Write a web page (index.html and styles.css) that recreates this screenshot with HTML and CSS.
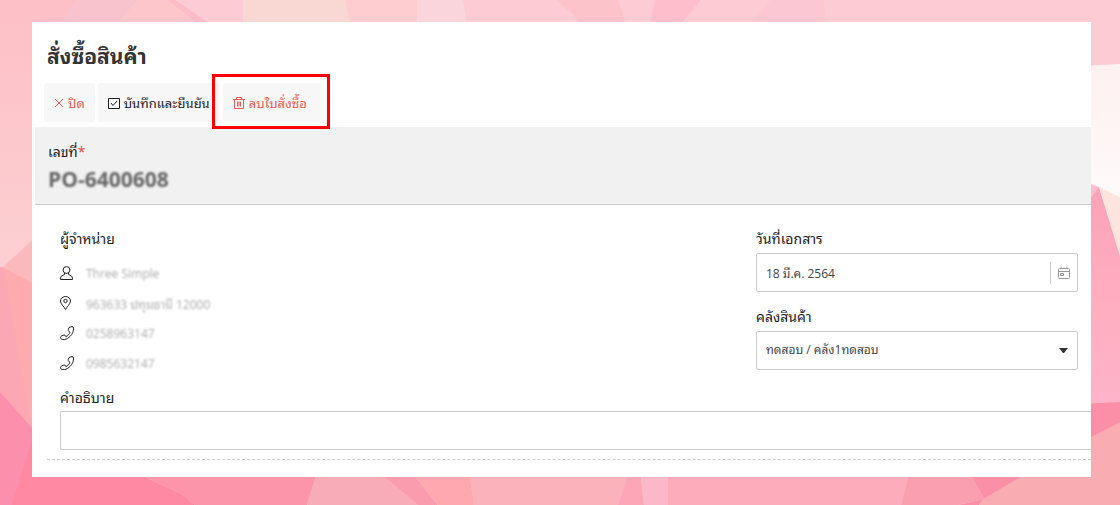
FILE: index.html
```html
<!DOCTYPE html>
<html lang="th">
<head>
  <meta charset="UTF-8" />
  <title>สั่งซื้อสินค้า</title>
  <link rel="stylesheet" href="styles.css">
</head>
<body>
  <svg class="backdrop" viewBox="0 0 1120 505" preserveAspectRatio="none" aria-hidden="true">
    <defs>
      <linearGradient id="fadeLeft" x1="0" y1="0" x2="0" y2="1">
        <stop offset="0" stop-color="#fdbfc6" />
        <stop offset="1" stop-color="#fcd0d2" />
      </linearGradient>
      <linearGradient id="fadeRight" x1="0" y1="0" x2="0" y2="1">
        <stop offset="0" stop-color="#faa2b9" />
        <stop offset="0.5" stop-color="#ffadbe" />
        <stop offset="1" stop-color="#feb3ca" />
      </linearGradient>
      <linearGradient id="fadeWhite" x1="0" y1="0" x2="0" y2="1">
        <stop offset="0" stop-color="#fdf0f0" />
        <stop offset="1" stop-color="#fffafa" />
      </linearGradient>
    </defs>
    <!-- top -->
    <path fill="#fdcbd3" d="M0 0h1120v80H0z" />
    <path fill="url(#fadeLeft)" d="M0 0h76L50 40v230H0z" />
    <path fill="#f9c3cd" d="M76 0h62l-36 40H50z" />
    <path fill="#fdc6ca" d="M138 0h37l45 30H112z" />
    <path fill="#fcbcc6" d="M168 0h7l35 24h-12z" />
    <path fill="#f9d8d3" d="M243 0h102l6 24H243z" />
    <path fill="#fdcdd0" d="M345 0h72v24h-66z" />
    <path fill="#fad5db" d="M417 0h46l4 24h-50z" />
    <path fill="#fdc3ca" d="M557 0h61l8 24h-43z" />
    <path fill="#ffbecb" d="M655 0h46l-20 24h-31z" />
    <path fill="#fbc7d2" d="M771 0h52l4 24h-78z" />
    <!-- left -->
    <path fill="#fbb9be" d="M3 267l37-34v54z" />
    <path fill="#fdabaf" d="M3 267l37 20v160L0 392V267z" />
    <path fill="#faa5b7" d="M0 267l3 0l20 115l9 46L0 392z" opacity="0.6" />
    <path fill="#fc8fab" d="M0 392l40 45v68H0z" />
    <!-- right -->
    <path fill="url(#fadeWhite)" d="M1080 66l40-2v140h-40z" />
    <path fill="#fcbcd0" d="M1080 180l19 7l-19 24z" />
    <path fill="url(#fadeRight)" d="M1080 211l19-24l21 69v146l-40 2z" />
    <path fill="#fde4de" d="M1099 187l21 10v59z" />
    <path fill="#f9acb2" d="M1080 404l40-2v103h-140z" />
    <path fill="#fc8fa8" d="M1080 404l40-2v20l-40 21z" />
    <!-- bottom -->
    <path fill="#ff88a2" d="M32 440h113v37l37 17l13 11H12z" />
    <path fill="#fc95aa" d="M145 470h173l-11 35H195l-13-11l-37-17z" />
    <path fill="#f7acb7" d="M318 470h58l42 35H307z" />
    <path fill="#fb9cae" d="M376 470h34l28 35h-20z" />
    <path fill="#ffa8b0" d="M410 470h59l5 35h-36z" />
    <path fill="#fbb2bb" d="M469 470h161l-12 35H474z" />
    <path fill="#fca6b8" d="M630 470h10l4 35h-26z" />
    <path fill="#fcb8c8" d="M640 470h28v35h-24z" />
    <path fill="#fcacba" d="M668 470h242l-9 35H668z" />
    <path fill="#f99fb0" d="M910 470h58l16 29l-26 6h-57z" />
    <path fill="#fc8fa8" d="M968 470h64l-48 29zM984 499l-26 6h21z" />
    <path fill="#f9acb2" d="M1032 470h88v35H979l5-6z" />
  </svg>

  <main class="panel">
    <h1>สั่งซื้อสินค้า</h1>

    <div class="toolbar">
      <button type="button" class="btn danger">
        <svg class="icon-close" viewBox="0 0 10 10"><path d="M1 1l8 8M9 1L1 9" /></svg>
        ปิด
      </button>
      <button type="button" class="btn">
        <svg class="icon" viewBox="0 0 12 12"><path d="M.5 1.500h11v10H.5zM3 6l2 2.500L9 4" /></svg>
        บันทึกและยืนยัน
      </button>
      <button type="button" class="btn danger highlight">
        <svg class="icon" viewBox="0 0 12 12"><path d="M0 2.500h12M3.500 2.500v-2h5v2M1.500 2.500v9h9v-9M4.500 4.500v5M6 4.500v5M7.500 4.500v5" /></svg>
        ลบใบสั่งซื้อ
      </button>
    </div>

    <section class="doc-number">
      <div class="doc-label">เลขที่<span class="required">*</span></div>
      <div class="doc-value">PO-6400608</div>
    </section>

    <div class="details">
      <section class="supplier">
        <h2>ผู้จำหน่าย</h2>
        <ul>
          <li>
            <svg viewBox="0 0 14 14"><circle cx="6.500" cy="4" r="3.400" /><path d="M4.500 7v1.500L1.500 10Q.5 10.500.5 13.500h12q0-3-1-3.500L8.500 8.500V7" /></svg>
            <span class="masked">Three Simple</span>
          </li>
          <li>
            <svg viewBox="0 0 14 14"><path d="M5.500 13.500C4 10.500.5 8 .5 5a5 4.500 0 0 1 10 0c0 3-3.500 5.500-5 8.500z" /><circle cx="5.500" cy="5" r="1.700" /></svg>
            <span class="masked">963633 ปทุมธานี 12000</span>
          </li>
          <li>
            <svg viewBox="0 0 14 14"><path d="M9 1.500L12 .5q1.500 0 1.500 2.500c0 5-5 10-9 10.500C2 14 .5 13 .5 11.500q0-1 1-1.500L4 9q1-.2 1.500 1l.3.700C7.500 10 9.500 8 10 6.300L9 5.500Q8 5 8.300 3.500z" /></svg>
            <span class="masked">0258963147</span>
          </li>
          <li>
            <svg viewBox="0 0 14 14"><path d="M9 1.500L12 .5q1.500 0 1.500 2.500c0 5-5 10-9 10.500C2 14 .5 13 .5 11.500q0-1 1-1.500L4 9q1-.2 1.500 1l.3.700C7.500 10 9.500 8 10 6.300L9 5.500Q8 5 8.300 3.500z" /></svg>
            <span class="masked">0985632147</span>
          </li>
        </ul>
      </section>

      <section class="options">
        <label for="docDate">วันที่เอกสาร</label>
        <div class="field">
          <input type="text" id="docDate" value="18 มี.ค. 2564" />
          <button type="button" class="calendar" aria-label="เลือกวันที่">
            <svg viewBox="0 0 12 12"><path d="M.5 2.500q0-1 1-1h9q1 0 1 1v8q0 1-1 1h-9q-1 0-1-1zM.5 4.500h11M3 0v2M9 0v2M2.500 6.500h3v2h-3z" /></svg>
          </button>
        </div>

        <label for="warehouse">คลังสินค้า</label>
        <select id="warehouse" class="field">
          <option>ทดสอบ / คลัง1ทดสอบ</option>
        </select>
      </section>
    </div>

    <div class="description">
      <label for="description">คำอธิบาย</label>
      <input type="text" id="description" />
    </div>
    <hr>
  </main>
</body>
</html>
```
FILE: styles.css
```css
* {
  box-sizing: border-box;
}

body {
  margin: 0;
  padding: 22px 29px 28px 32px;
  font-family: "Open Sans", "Noto Sans Thai Looped", "Noto Sans", sans-serif;
  font-size: 14px;
  color: #222;
  background: #fdcbd3;
}

.backdrop {
  position: fixed;
  inset: 0;
  width: 100%;
  height: 100%;
  z-index: -1;
}

.panel {
  background: #fff;
  overflow: hidden;
  padding-bottom: 17px;
}

h1 {
  margin: 0;
  padding: 16px 15px 0;
  font-size: 21px;
  line-height: 36px;
  font-weight: bold;
  color: #333;
}

button, input, select {
  font: inherit;
  color: #444;
}

.toolbar {
  display: flex;
  gap: 3px;
  padding: 9px 12px 5px;
}

.btn {
  display: flex;
  align-items: center;
  gap: 4px;
  height: 39px;
  padding: 0 10px;
  border: none;
  border-radius: 3px;
  background: #f7f7f7;
  color: #222;
  font-size: 13px;
  white-space: nowrap;
  cursor: pointer;
}

.btn.danger {
  color: #ea5b50;
}

.highlight {
  position: relative;
  padding-right: 14px;
}

.highlight::after {
  content: "";
  position: absolute;
  inset: -9px -9px -7px -11px;
  border: 3px solid #f00;
}

.panel svg {
  fill: none;
  stroke: currentColor;
}

.icon {
  width: 12px;
  height: 12px;
}

.icon-close {
  width: 10px;
  height: 10px;
}

.doc-number {
  margin-left: 3px;
  padding: 13px 13px 10px;
  background: #f1f1f1;
  border-bottom: 1px solid #ccc;
}

.doc-label {
  line-height: 24px;
}

.required {
  color: #ea4335;
}

.doc-value {
  font-size: 21px;
  line-height: 30px;
  font-weight: bold;
  color: #666;
  filter: blur(1px);
}

.details {
  display: grid;
  grid-template-columns: 1fr 322px;
  padding: 22px 13px 0 28px;
}

h2, label {
  display: block;
  margin: 0;
  font-size: 14px;
  line-height: 24px;
  font-weight: normal;
}

.supplier ul {
  margin: 7px 0 0;
  padding: 0;
  list-style: none;
}

.supplier li {
  display: flex;
  align-items: center;
  gap: 12px;
  height: 30px;
}

.supplier svg {
  width: 14px;
  height: 14px;
}

.masked {
  font-size: 12px;
  color: #aaa;
  filter: blur(1px);
}

.field {
  display: flex;
  align-items: center;
  width: 100%;
  height: 39px;
  margin: 2px 0 13px;
  border: 1px solid #ccc;
  border-radius: 2px;
  background: #fff;
  font-size: 12px;
}

.field input {
  flex: 1;
  min-width: 0;
  border: none;
  padding: 0 9px;
  background: none;
}

.calendar {
  height: 22px;
  padding: 0 7px;
  border: none;
  border-left: 1px solid #ccc;
  background: none;
  color: #999;
}

.calendar svg {
  display: block;
  width: 12px;
  height: 12px;
}

select.field {
  appearance: none;
  margin-bottom: 16px;
  padding: 0 30px 2px 9px;
  background: #fff url("data:image/svg+xml,%3Csvg xmlns='http://www.w3.org/2000/svg' width='9' height='6'%3E%3Cpath fill='%23333' d='M0 0h9L5 5H4z'/%3E%3C/svg%3E") no-repeat right 9px center;
}

/* the box runs on past the right edge of the panel */
.description {
  padding-left: 28px;
}

.description input {
  display: block;
  width: 100%;
  height: 39px;
  margin-top: 1px;
  border: 1px solid #ccc;
  border-right: none;
  border-radius: 2px 0 0 2px;
}

hr {
  margin: 9px 0 0 15px;
  border: none;
  border-top: 1px dashed #ccc;
}
```
